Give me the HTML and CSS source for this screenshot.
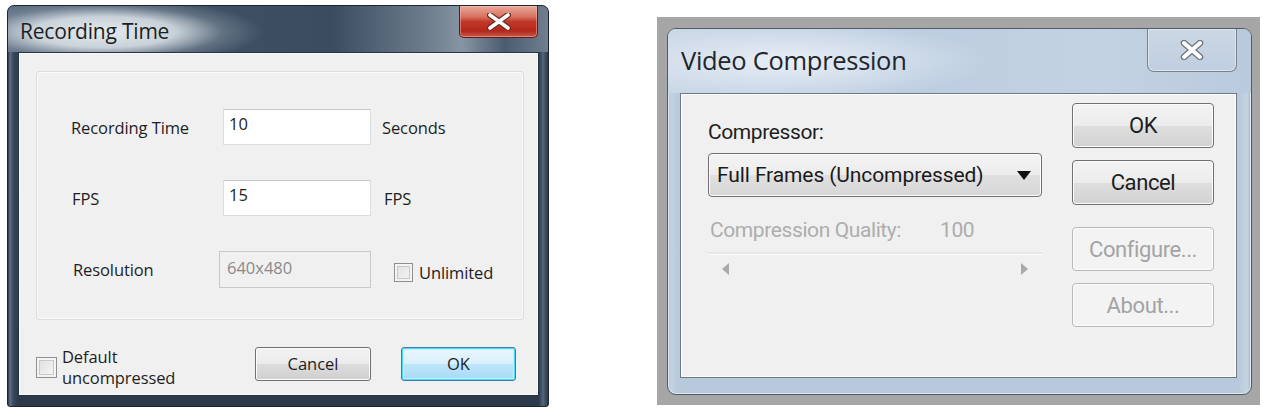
FILE: index.html
```html
<!DOCTYPE html>
<html>
<head>
<meta charset="utf-8">
<link rel="stylesheet" href="styles.css">
</head>
<body>
<div class="win dark">
  <div class="titlebar">
    <span class="title">Recording Time</span>
    <div class="close red">
      <svg width="24" height="17" viewBox="0 0 24 17"><path d="M3 2 L21 15 M21 2 L3 15" stroke="#6d2a24" stroke-width="6" stroke-linecap="round" fill="none"/><path d="M3 2 L21 15 M21 2 L3 15" stroke="#ffffff" stroke-width="3.6" stroke-linecap="round" fill="none"/></svg>
    </div>
  </div>
  <div class="client">
    <div class="panel">
      <div class="grid">
        <span class="lbl">Recording Time</span>
        <div class="input">10</div>
        <span class="lbl unit">Seconds</span>
        <span class="lbl">FPS</span>
        <div class="input">15</div>
        <span class="lbl unit unit-fps">FPS</span>
        <span class="lbl">Resolution</span>
        <div class="input disabled">640x480</div>
        <label class="check unlimited"><span class="box"></span><span>Unlimited</span></label>
      </div>
    </div>
    <div class="footer">
      <label class="check default"><span class="box"></span><span class="two">Default<br>uncompressed</span></label>
      <div class="btns">
        <div class="btn">Cancel</div>
        <div class="btn focus">OK</div>
      </div>
    </div>
  </div>
</div>

<div class="backdrop">
  <div class="win light">
    <div class="titlebar">
      <span class="title">Video Compression</span>
      <div class="close ghost">
        <svg width="24" height="20" viewBox="0 0 24 20"><path d="M4 3 L20 17 M20 3 L4 17" stroke="#6f767e" stroke-width="6.5" stroke-linecap="round" fill="none"/><path d="M4 3 L20 17 M20 3 L4 17" stroke="#ffffff" stroke-width="4" stroke-linecap="round" fill="none"/></svg>
      </div>
    </div>
    <div class="client">
      <div class="left">
        <div class="vlbl">Compressor:</div>
        <div class="select">
          <span>Full Frames (Uncompressed)</span>
          <svg width="14" height="9" viewBox="0 0 14 9"><polygon points="0,0 14,0 7,9" fill="#111"/></svg>
        </div>
        <div class="quality"><span>Compression Quality:</span><span class="num">100</span></div>
        <div class="slider">
          <div class="track"></div>
          <div class="arrows">
            <svg width="7" height="12" viewBox="0 0 7 12"><polygon points="7,0 7,12 0,6" fill="#a9a9a9"/></svg>
            <svg width="7" height="12" viewBox="0 0 7 12"><polygon points="0,0 0,12 7,6" fill="#a9a9a9"/></svg>
          </div>
        </div>
      </div>
      <div class="right">
        <div class="vbtn">OK</div>
        <div class="vbtn">Cancel</div>
        <div class="vbtn off gap">Configure...</div>
        <div class="vbtn off">About...</div>
      </div>
    </div>
  </div>
</div>
</body>
</html>
```

FILE: styles.css
```css
html, body {
  margin: 0;
  padding: 0;
  background: #ffffff;
}
body {
  width: 1268px;
  height: 413px;
  display: flex;
  align-items: flex-start;
  padding: 5px 0 0 7px;
  box-sizing: border-box;
  font-family: "Open Sans", "DejaVu Sans", sans-serif;
  color: #1e1e1e;
  overflow: hidden;
}

/* ---------- dark (left) window ---------- */
.win.dark {
  width: 542px;
  height: 402px;
  box-sizing: border-box;
  border: 1px solid #1d2630;
  border-radius: 7px 7px 3px 3px;
  padding: 0 9px 10px 10px;
  display: flex;
  flex-direction: column;
  background:
    linear-gradient(to right, #2a3644 0, #5f7184 2px, #3a4a5c 5px, #2f3d4d 9px, transparent 10px, transparent calc(100% - 9px), #2f3d4d calc(100% - 9px), #52657a calc(100% - 5px), #2a3644 100%),
    linear-gradient(to bottom, #3a4a5c, #33435a 60%, #2b394a);
}
.dark .titlebar {
  height: 46px;
  margin: 0 -9px 0 -10px;
  padding: 0 10px 0 12px;
  display: flex;
  justify-content: space-between;
  align-items: flex-start;
  border-radius: 6px 6px 0 0;
  background:
    radial-gradient(ellipse 160px 34px at 95px 26px, rgba(228,234,238,1) 0%, rgba(212,220,226,0.92) 45%, rgba(150,165,178,0.4) 75%, rgba(80,97,115,0) 100%),
    linear-gradient(to right, #56687c 0%, #3f5064 35%, #3b4c60 60%, #6e7e8e 78%, #8795a3 84%, #4b5c70 92%, #6f7f8f 100%);
}
.dark .title {
  font-size: 21px;
  line-height: 26px;
  margin-top: 12px;
  color: #1b1f24;
  letter-spacing: -0.2px;
}
.close.red {
  width: 79px;
  height: 32px;
  box-sizing: border-box;
  border: 1px solid #5a1c18;
  border-top: none;
  border-radius: 0 0 5px 5px;
  background: linear-gradient(to bottom, #e9a99a 0%, #d7715f 35%, #c1392b 50%, #b3271a 80%, #c8584a 100%);
  display: flex;
  align-items: center;
  justify-content: center;
  box-shadow: inset 0 0 0 1px rgba(255,200,190,0.45);
}
.dark .client {
  flex: 1;
  border: 1px solid #26323f;
  background: #f0f0f0;
  box-shadow: inset 0 0 0 1px #fbfbfb;
  padding: 18px 14px 0 17px;
  display: flex;
  flex-direction: column;
}
.panel {
  height: 249px;
  box-sizing: border-box;
  border: 1px solid #dcdcdc;
  border-radius: 3px;
  background: #f0f0f0;
  box-shadow: inset 0 0 0 1px #fafafa;
  padding: 37px 0 0 34px;
}
.grid {
  display: grid;
  grid-template-columns: 152px 148px auto;
  grid-template-rows: 36px 36px 37px;
  row-gap: 35px;
  align-items: center;
}
.lbl {
  font-size: 16.5px;
  color: #1e1e1e;
  letter-spacing: -0.1px;
}
.grid > .lbl:nth-child(4) { padding-left: 1px; }
.grid > .lbl:nth-child(7) { padding-left: 2px; }
.unit { padding-left: 11px; }
.unit-fps { padding-left: 13px; }
.input {
  height: 36px;
  box-sizing: border-box;
  border: 1px solid #dadde2;
  border-top-color: #c4c8ce;
  background: #ffffff;
  font-size: 16.5px;
  padding: 3px 0 0 5px;
  line-height: 22px;
}
.input.disabled {
  margin-left: -4px;
  height: 37px;
  background: #f0f0f0;
  border-color: #c9c9c9;
  color: #8a8a8a;
  padding-top: 5px;
  padding-left: 7px;
}
.check {
  display: flex;
  align-items: center;
  font-size: 16.5px;
  color: #1e1e1e;
  letter-spacing: -0.1px;
}
.box {
  width: 19px;
  height: 19px;
  box-sizing: border-box;
  border: 1px solid #8f8f8f;
  background: linear-gradient(135deg, #dedede, #f7f7f7);
  box-shadow: inset 0 0 0 2px #f4f4f4, inset 0 0 0 3px #c8c8c8;
  flex: none;
}
.unlimited { padding-left: 23px; padding-top: 5px; }
.unlimited .box { margin-right: 6px; }
.footer {
  margin-top: 19px;
  display: flex;
  align-items: center;
  justify-content: space-between;
  padding: 0 8px 0 0;
}
.default { margin-top: 8px; }
.default .box { width: 21px; height: 21px; margin-right: 5px; }
.two { line-height: 21px; font-size: 16.5px; margin-top: -1px; }
.btns {
  display: flex;
  gap: 30px;
}
.btn {
  width: 116px;
  height: 34px;
  box-sizing: border-box;
  border: 1px solid #707070;
  border-radius: 3px;
  background: linear-gradient(to bottom, #f2f2f2 0%, #ebebeb 50%, #dddddd 51%, #cfcfcf 100%);
  box-shadow: inset 0 0 0 1px #fcfcfc;
  font-size: 16.5px;
  display: flex;
  align-items: center;
  justify-content: center;
  color: #1e1e1e;
}
.btn.focus {
  width: 115px;
  border-color: #3c7fb1;
  background: linear-gradient(to bottom, #eaf6fd 0%, #d9f0fc 50%, #bee6fd 51%, #a7d9f5 100%);
  box-shadow: inset 0 0 0 1px #48d8f8, inset 0 0 0 2px #c8eefb;
}

/* ---------- light (right) window ---------- */
.backdrop {
  margin: 12px 0 0 108px;
  width: 603px;
  height: 388px;
  box-sizing: border-box;
  background: #a6a6a6;
  padding: 11px 8px 10px 10px;
}
.win.light {
  height: 367px;
  box-sizing: border-box;
  border: 1px solid #505b66;
  border-radius: 9px;
  padding: 0 14px 16px 12px;
  display: flex;
  flex-direction: column;
  background: linear-gradient(to right, #aebfd2 0, #c4d3e3 3px, #b8c9db 10px, #b8c9db calc(100% - 12px), #c6d4e2 calc(100% - 4px), #a9b9ca 100%);
  box-shadow: inset 0 0 0 1px #dfe8f1;
}
.light .titlebar {
  height: 64px;
  margin: 0 -14px 0 -12px;
  padding: 0 14px 0 13px;
  display: flex;
  justify-content: space-between;
  align-items: flex-start;
  border-radius: 8px 8px 0 0;
  background:
    radial-gradient(ellipse 200px 40px at 120px 32px, rgba(236,242,248,0.9), rgba(236,242,248,0) 100%),
    linear-gradient(to right, #c8d6e5 0%, #bccde0 40%, #c3d2e2 75%, #b9cadd 100%);
}
.light .title {
  font-family: "Open Sans", "DejaVu Sans", sans-serif;
  font-size: 25.5px;
  line-height: 30px;
  margin-top: 16px;
  color: #1f252c;
  letter-spacing: -0.3px;
}
.close.ghost {
  width: 90px;
  height: 43px;
  box-sizing: border-box;
  border: 1px solid #76838f;
  border-top: none;
  border-radius: 0 0 7px 7px;
  background: linear-gradient(to bottom, #cbd7e4, #bfcee0);
  box-shadow: inset 0 0 0 1px #dde6ef;
  display: flex;
  align-items: center;
  justify-content: center;
}
.light .client {
  flex: 1;
  border: 1px solid #6b7989;
  background: #f0f0f0;
  box-shadow: inset 0 0 0 1px #ffffff;
  padding: 9px 22px 0 27px;
  display: flex;
  justify-content: space-between;
  font-family: "Roboto", "Open Sans", sans-serif;
}
.left {
  width: 334px;
  display: flex;
  flex-direction: column;
}
.vlbl {
  margin-top: 15px;
  font-size: 21px;
  line-height: 28px;
  color: #1e1e1e;
  letter-spacing: -0.4px;
}
.select {
  margin-top: 7px;
  height: 44px;
  box-sizing: border-box;
  border: 1px solid #707070;
  border-radius: 4px;
  background: linear-gradient(to bottom, #f4f4f4 0%, #ececec 50%, #e0e0e0 51%, #d6d6d6 100%);
  box-shadow: inset 0 0 0 1px #fbfbfb;
  display: flex;
  align-items: center;
  justify-content: space-between;
  padding: 0 10px 0 8px;
  font-size: 21px;
  color: #1a1a1a;
  letter-spacing: -0.1px;
}
.quality {
  margin-top: 19px;
  display: flex;
  font-size: 21px;
  line-height: 28px;
  color: #adadad;
  padding-left: 2px;
  letter-spacing: -0.4px;
}
.quality .num { margin-left: 39px; }
.slider {
  margin-top: 8px;
  display: flex;
  flex-direction: column;
}
.track {
  height: 2px;
  background: #e6e6e6;
  border-bottom: 1px solid #fdfdfd;
}
.arrows {
  margin-top: 8px;
  display: flex;
  justify-content: space-between;
  padding: 0 14px 0 14px;
}
.right {
  display: flex;
  flex-direction: column;
  gap: 12px;
}
.vbtn {
  width: 142px;
  height: 45px;
  box-sizing: border-box;
  border: 1px solid #707070;
  border-radius: 4px;
  background: linear-gradient(to bottom, #f3f3f3 0%, #ececec 50%, #dedede 51%, #d2d2d2 100%);
  box-shadow: inset 0 0 0 1px #fcfcfc;
  display: flex;
  align-items: center;
  justify-content: center;
  font-size: 22px;
  color: #1e1e1e;
  letter-spacing: -0.4px;
}
.vbtn.off {
  border-color: #b9b9b9;
  background: #f3f3f3;
  color: #a3a3a3;
  height: 44px;
}
.vbtn.gap { margin-top: 10px; }
```
